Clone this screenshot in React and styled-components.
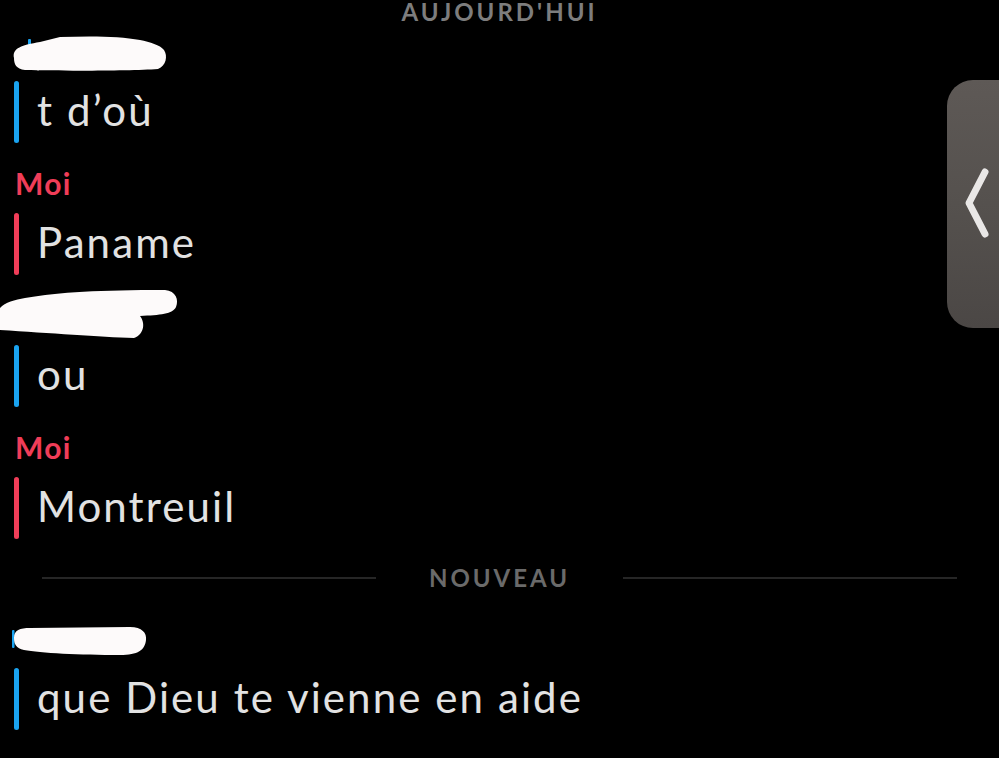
import React from 'react'
import styled, { createGlobalStyle } from 'styled-components'

const BLUE = '#1aa3f0'
const RED = '#f03d58'

const messages = [
    { id: 1, me: false, text: 't d’où', blot: 'one' },
    { id: 2, me: true, text: 'Paname' },
    { id: 3, me: false, text: 'ou', blot: 'two' },
    { id: 4, me: true, text: 'Montreuil' },
]

const fresh = [
    { id: 5, me: false, text: 'que Dieu te vienne en aide', blot: 'three' },
]

// redaction scribbles, page coordinates minus the row origin
const blots = {
    one: {
        x: -4, y: -2, w: 160, h: 40,
        d: 'M4 25 C2 15 12 12 30 9 L50 4 C80 3 110 3 130 7 C140 9 150 12 154 17 C158 23 156 33 148 36 C120 38 50 38 15 37 C6 36 4 31 4 25 Z',
        sliver: { x: 18, y: 6, w: 3, h: 6 },
    },
    two: {
        x: -14, y: -10, w: 182, h: 52,
        d: 'M0 19 C5 13 15 11 25 9 C60 3 100 1 165 1 C176 2 179 11 176 18 C173 25 160 26 140 27 C145 33 145 45 134 49 C100 48 50 44 0 41 Z',
    },
    three: {
        x: -2, y: 4, w: 136, h: 30,
        d: 'M2 12 C2 4 8 2 18 2 L118 1 C130 1 135 7 134 14 C133 24 126 29 108 29 C68 29 28 27 12 24 C4 22 2 18 2 12 Z',
        sliver: { x: 0, y: 4, w: 2.5, h: 18 },
    },
}

const Redaction = ({ kind }) => {
    const b = blots[kind]
    return (
        <Blot style={{ left: b.x, top: b.y }} width={b.w} height={b.h} viewBox={`0 0 ${b.w} ${b.h}`}>
            {b.sliver && <rect x={b.sliver.x} y={b.sliver.y} width={b.sliver.w} height={b.sliver.h} rx="1" fill={BLUE} />}
            <path d={b.d} fill="#fdfafa" />
        </Blot>
    )
}

const Message = ({ me, text, blot }) => (
    <Group>
        <NameRow me={me}>
            {me ? 'Moi' : <Redaction kind={blot} />}
        </NameRow>
        <Bubble>
            <Bar me={me} />
            <Text>{text}</Text>
        </Bubble>
    </Group>
)

const App = () => (
    <Screen>
        <GlobalStyle />
        <DayLabel>AUJOURD'HUI</DayLabel>
        {messages.map(m => <Message key={m.id} {...m} />)}
        <Divider>
            <Rule />
            <DividerLabel>NOUVEAU</DividerLabel>
            <Rule />
        </Divider>
        {fresh.map(m => <Message key={m.id} {...m} />)}
        <SideHandle>
            <svg width="30" height="76" viewBox="0 0 30 76">
                <path d="M20 6 L4 37 L20 68" fill="none" stroke="#e9e7e6" strokeWidth="7" strokeLinecap="round" strokeLinejoin="round" />
            </svg>
        </SideHandle>
    </Screen>
)

const GlobalStyle = createGlobalStyle`
    html, body {
        margin: 0;
        background: #000;
    }
    body {
        font-family: Lato, "Noto Sans", sans-serif;
        overflow: hidden;
    }
`

const Screen = styled.div`
    position: relative;
    width: 999px;
    height: 758px;
    background: #000;
    padding: 0 14px;
    box-sizing: border-box;
    overflow: hidden;
    display: flex;
    flex-direction: column;
`

const DayLabel = styled.div`
    height: 26px;
    line-height: 24px;
    text-align: center;
    font-size: 24px;
    font-weight: 700;
    letter-spacing: 3px;
    color: #7d7d7d;
    margin-bottom: 9px;
`

const Group = styled.div`
    display: flex;
    flex-direction: column;
    gap: 14px;
    margin-bottom: 24px;
`

const NameRow = styled.div`
    position: relative;
    height: 32px;
    line-height: 32px;
    font-size: 30px;
    font-weight: 700;
    letter-spacing: 1.3px;
    color: ${props => props.me ? RED : BLUE};
    padding-left: 1px;
`

const Blot = styled.svg`
    position: absolute;
    overflow: visible;
`

const Bubble = styled.div`
    display: flex;
    align-items: flex-start;
    height: 62px;
`

const Bar = styled.div`
    width: 5px;
    height: 62px;
    border-radius: 3px;
    background: ${props => props.me ? RED : BLUE};
    margin-right: 18px;
`

const Text = styled.div`
    font-size: 42px;
    line-height: 58px;
    letter-spacing: 2.1px;
    color: #e2e2e2;
    white-space: nowrap;
`

const Divider = styled.div`
    display: flex;
    align-items: center;
    gap: 53px;
    padding: 0 28px;
    height: 28px;
    margin-top: 1px;
    margin-bottom: 30px;
`

const Rule = styled.div`
    flex: 1;
    height: 2px;
    background: #262626;
`

const DividerLabel = styled.div`
    font-size: 24px;
    font-weight: 700;
    letter-spacing: 3px;
    color: #6a6a6a;
    line-height: 28px;
`

const SideHandle = styled.div`
    position: absolute;
    top: 80px;
    left: 947px;
    width: 80px;
    height: 248px;
    border-radius: 26px;
    background: linear-gradient(180deg, #5e5956 0%, #55514e 50%, #4b4745 100%);
    display: flex;
    align-items: center;
    padding-left: 18px;
    box-sizing: border-box;
`

export default App
